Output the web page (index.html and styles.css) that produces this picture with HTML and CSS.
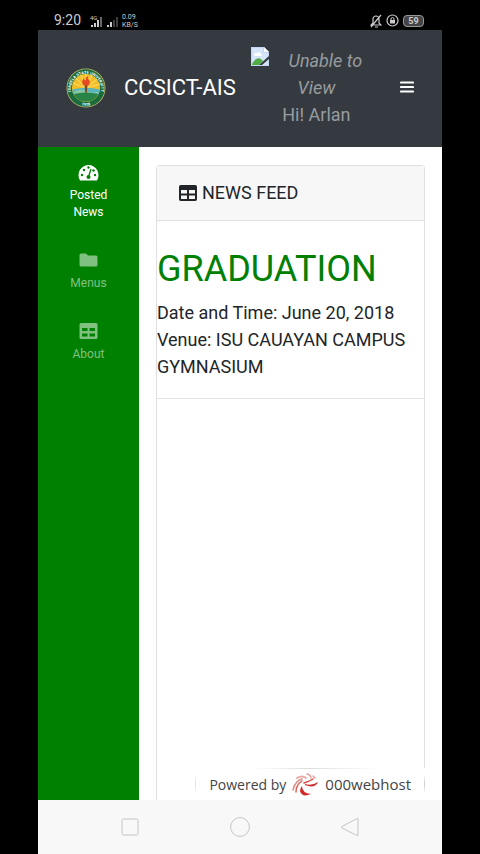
FILE: index.html
```html
<!DOCTYPE html>
<html lang="en">
<head>
  <meta charset="UTF-8" />
  <meta name="viewport" content="width=device-width, initial-scale=1.0" />
  <title>CCSICT-AIS</title>
  <link rel="stylesheet" href="styles.css">
</head>
<body>
  <div class="status-bar">
    <span class="clock">9:20</span>
    <svg class="signal" width="31" height="14" viewBox="0 0 31 14" fill="#ccc">
      <text x="1" y="6" font-size="6">4G</text>
      <path d="M2 11h2v2H2zM5 9h2v4H5zM8 6h2v7H8z" />
      <path d="M11 3h2v10h-2z" opacity=".5" />
      <path d="M18 11h2v2h-2zM21 8h2v5h-2z" />
      <path d="M24 6h2v7h-2zM27 3h2v10h-2z" opacity=".3" />
    </svg>
    <div class="net-speed">
      <div>0.09</div>
      <div>KB/S</div>
    </div>
    <div class="status-right">
      <svg width="12" height="14" viewBox="0 0 12 14" fill="none" stroke="#ccc" stroke-width="1.2">
        <path d="M1 11h10L9 9V5a3 3 0 0 0-6 0v4zM5 13h3M1 13L11 1" />
      </svg>
      <svg width="13" height="13" viewBox="0 0 13 13" fill="none" stroke="#ccc">
        <circle cx="6.5" cy="6.5" r="5.5" stroke-width="1.2" />
        <path d="M5 6V5a1.5 1.5 0 0 1 3 0v1" />
        <path d="M4 6h5v3.5H4z" fill="#ccc" stroke="none" />
      </svg>
      <span class="battery">59</span>
    </div>
  </div>

  <header class="navbar">
    <svg class="logo" viewBox="0 0 40 40">
      <defs>
        <path id="ring-top" d="M8.5 31A15.2 15.2 0 1 1 31.5 31" />
        <path id="ring-bottom" d="M9 34Q20 42 31 34" />
      </defs>
      <circle cx="20" cy="20" r="19.5" fill="#c2b36b" />
      <circle cx="20" cy="20" r="18.7" fill="#176b3d" />
      <circle cx="20" cy="20" r="14" fill="#f4bd27" />
      <path d="M20 20L7 15M20 20L10 10M20 20L15 7M20 20V6M20 20L26 7M20 20L31 11M20 20L34 16" stroke="#fbe06a" />
      <path d="M6.1 21.5Q20 18 33.9 21.5A14 14 0 0 1 32 27H8A14 14 0 0 1 6.1 21.5z" fill="#57b5bb" />
      <path d="M8 24Q14 20 20 23T32 24V27H8z" fill="#8bc6a4" />
      <path d="M7.5 26Q20 23 32.5 26A14 14 0 0 1 7.5 26z" fill="#278346" />
      <path d="M18.5 17h3L20.7 25h-1.4z" fill="#7c4a24" />
      <path d="M17 17Q15 13 18 10Q18 13 20 12Q19 9 22 8Q21 11 24 13Q24 16 22 18z" fill="#e44b24" />
      <text class="seal-text"><textPath href="#ring-top" startOffset="50%" text-anchor="middle">ISABELA STATE UNIVERSITY</textPath></text>
      <text class="seal-text"><textPath href="#ring-bottom" startOffset="50%" text-anchor="middle">1978</textPath></text>
    </svg>
    <a class="brand" href="#">CCSICT-AIS</a>
    <div class="user">
      <svg class="missing-photo" width="18" height="19" viewBox="0 0 18 19">
        <path d="M0 0h13l5 5v14H0z" fill="#c4d7f1" />
        <path d="M1 1h11v5h5v12H1z" fill="#d5e4f8" />
        <path d="M13 0v5h5z" fill="#fff" />
        <path d="M3 8Q3 5 6 6Q8 4 10 7Q12 8 10 9H4z" fill="#fff" />
        <path d="M1 17Q5 9 10 12L12 14L8 18H1z" fill="#52ac46" />
        <path d="M18 9L8 18h3l7-6z" fill="#343a40" />
      </svg>
      <em>Unable to View</em>
      <div>Hi! Arlan</div>
    </div>
    <button class="toggler" aria-label="Toggle menu">
      <svg width="14" height="13" viewBox="0 0 14 13" fill="none" stroke="#fff" stroke-width="2.2" stroke-linecap="round">
        <path d="M1 1.5h12M1 6h12M1 10.5h12" />
      </svg>
    </button>
  </header>

  <div class="wrapper">
    <nav class="sidebar">
      <a class="nav-item active" href="#">
        <svg width="21" height="18" viewBox="0 0 21 18">
          <path d="M1.8 17A10 10 0 1 1 19.2 17Q19 17.5 18.5 17.5H2.5Q2 17.5 1.8 17z" fill="currentColor" />
          <g fill="#008000">
            <circle cx="4" cy="12" r="1.2" /><circle cx="6" cy="7" r="1.2" /><circle cx="10.5" cy="4.5" r="1.2" />
            <circle cx="15.5" cy="7.5" r="1.2" /><circle cx="17" cy="12" r="1.2" /><circle cx="10.5" cy="14" r="2" />
          </g>
          <path d="M10.5 14L13 6" stroke="#008000" stroke-width="1.3" />
        </svg>
        <span>Posted News</span>
      </a>
      <a class="nav-item" href="#">
        <svg width="21" height="18" viewBox="0 0 21 18" fill="currentColor">
          <path d="M3 2.5h5l2 2h8q1.5 0 1.5 1.5v8q0 1.5-1.5 1.5H3q-1.5 0-1.5-1.5V4q0-1.5 1.5-1.5z" />
        </svg>
        <span>Menus</span>
      </a>
      <a class="nav-item" href="#">
        <svg width="21" height="18" viewBox="0 0 21 18" fill="currentColor" fill-rule="evenodd">
          <path d="M3 1h15q1.5 0 1.5 1.5v13Q19.5 17 18 17H3q-1.5 0-1.5-1.5v-13Q1.5 1 3 1zM4 6v3h5.5V6zM11.5 6v3H17V6zM4 11.5v3h5.5v-3zM11.5 11.5v3H17v-3z" />
        </svg>
        <span>About</span>
      </a>
    </nav>

    <main class="content">
      <section class="card">
        <div class="card-header">
          <svg width="18" height="16" viewBox="0 0 18 16" fill="currentColor" fill-rule="evenodd">
            <path d="M1.7 0h14.6Q18 0 18 1.7v12.6q0 1.7-1.7 1.7H1.7Q0 16 0 14.3V1.7Q0 0 1.7 0zM2 5v3.5h6V5zM10 5v3.5h6V5zM2 10.5V14h6v-3.5zM10 10.5V14h6v-3.5z" />
          </svg>
          NEWS FEED
        </div>
        <article class="post">
          <h1>GRADUATION</h1>
          <p>Date and Time: June 20, 2018<br>Venue: ISU CAUAYAN CAMPUS GYMNASIUM</p>
        </article>
      </section>
    </main>

    <a class="powered" href="#">
      Powered by
      <svg width="27" height="24" viewBox="0 0 27 24" fill="none" stroke-linecap="round">
        <path d="M1 17Q3 8 10 6" stroke="#dc8c84" stroke-width="1.5" />
        <path d="M5 5Q10 2 14 5" stroke="#e9aaa5" stroke-width="2" />
        <path d="M15 1Q19 2 19 5M21 3L23 5" stroke="#e7a19c" stroke-width="1.5" />
        <path d="M12 10Q18 8 21 6" stroke="#d64a44" stroke-width="1.5" />
        <path d="M13 11Q20 13 26 9Q23 16 13 12z" fill="#cf2a2a" />
        <path d="M10 13Q10 20 19 21Q10 25 8 18Q8 15 10 13z" fill="#cf2a2a" />
        <path d="M4 19Q4 12 10 8" stroke="#d9645d" stroke-width="1.5" />
      </svg>
      <span class="host">000webhost</span>
    </a>
  </div>

  <div class="system-nav">
    <button aria-label="Recent apps">
      <svg width="20" height="20" viewBox="0 0 20 20"><rect x="2" y="2" width="16" height="16" rx="1.5" /></svg>
    </button>
    <button aria-label="Home">
      <svg width="20" height="20" viewBox="0 0 20 20"><circle cx="10" cy="10" r="9.4" /></svg>
    </button>
    <button aria-label="Back">
      <svg width="20" height="20" viewBox="0 0 20 20"><path d="M17 1.5Q18 1 18 2v16q0 1-1 .5L2 11q-1-1 0-1.5z" /></svg>
    </button>
  </div>
</body>
</html>
```
FILE: styles.css
```css
* {
  box-sizing: border-box;
}

body {
  background: #000;
  color: #212529;
  font-family: Roboto, sans-serif;
  font-size: 18px;
  line-height: 27px;
  margin: 0;
  padding: 0 38px;
  min-height: 100vh;
  display: flex;
  flex-direction: column;
}

a {
  color: inherit;
  text-decoration: none;
}

button {
  border: none;
  background: none;
  padding: 0;
  display: flex;
  cursor: pointer;
}

.status-bar {
  height: 30px;
  padding: 11px 18px 0 16px;
  display: flex;
  align-items: center;
  color: #ccc;
}

.clock {
  font-size: 14px;
}

.signal {
  margin-left: 8px;
}

.net-speed {
  margin-left: 2px;
  font-size: 7px;
  line-height: 8px;
}

.status-right {
  margin-left: auto;
  display: flex;
  align-items: center;
  gap: 4px;
}

.battery {
  border: 1px solid #999;
  border-radius: 4px;
  background: #444;
  font-size: 9px;
  font-weight: bold;
  line-height: 10px;
  width: 21px;
  text-align: center;
}

.navbar {
  background: #343a40;
  padding: 17px 28px 19px;
  display: flex;
  align-items: center;
}

.logo {
  width: 40px;
  height: 40px;
  flex: none;
}

.seal-text {
  fill: #fff;
  font-size: 4px;
  font-weight: bold;
}

.brand {
  color: #fff;
  font-size: 22px;
  margin-left: 18px;
}

.user {
  flex: 1;
  margin: 0 18px 0 15px;
  color: #999c9f;
  text-align: center;
}

.missing-photo {
  float: left;
}

.wrapper {
  position: relative;
  flex: 1;
  display: flex;
  background: #fff;
}

.sidebar {
  width: 25%;
  background: #008000;
}

.nav-item {
  display: flex;
  flex-direction: column;
  align-items: center;
  gap: 6px;
  padding: 16px 24px 14px;
  color: #80c080;
  font-size: 12px;
  line-height: 17px;
  text-align: center;
}

.nav-item.active {
  color: #fff;
}

.content {
  flex: 1;
  padding: 18px 17px 0;
  display: flex;
}

.card {
  flex: 1;
  border: 1px solid #dfdfdf;
  border-bottom: none;
  border-radius: 4px 4px 0 0;
}

.card-header {
  display: flex;
  align-items: center;
  gap: 5px;
  padding: 13px 22px 14px;
  background: #f7f7f7;
  border-bottom: 1px solid #dfdfdf;
}

.post {
  padding: 27px 0 18px;
  border-bottom: 1px solid #e5e5e5;
}

.post h1 {
  margin: 0 0 8px;
  color: #008000;
  font-size: 36px;
  font-weight: normal;
  line-height: 43px;
}

.post p {
  margin: 0;
}

/* hosting badge, its edges fade out towards the corners */
.powered {
  position: absolute;
  right: 17px;
  bottom: 0;
  display: flex;
  align-items: center;
  gap: 6px;
  padding: 3px 14px 2px;
  background:
    linear-gradient(to right, transparent 25%, #ddd 50%, transparent 80%) top / 100% 1px no-repeat,
    linear-gradient(transparent 20%, #ddd 50%, transparent 80%) left / 1px 100% no-repeat,
    linear-gradient(transparent 20%, #ccc 50%, transparent 80%) right / 1px 100% no-repeat,
    #fff;
  color: #444;
  font-family: "Open Sans", sans-serif;
  font-size: 14px;
}

.host {
  font-size: 15px;
}

.system-nav {
  height: 54px;
  background: #f8f8f8;
  display: flex;
  justify-content: center;
  align-items: center;
  gap: 90px;
}

.system-nav svg {
  fill: none;
  stroke: #c4c4c4;
  stroke-width: 1px;
}
```
